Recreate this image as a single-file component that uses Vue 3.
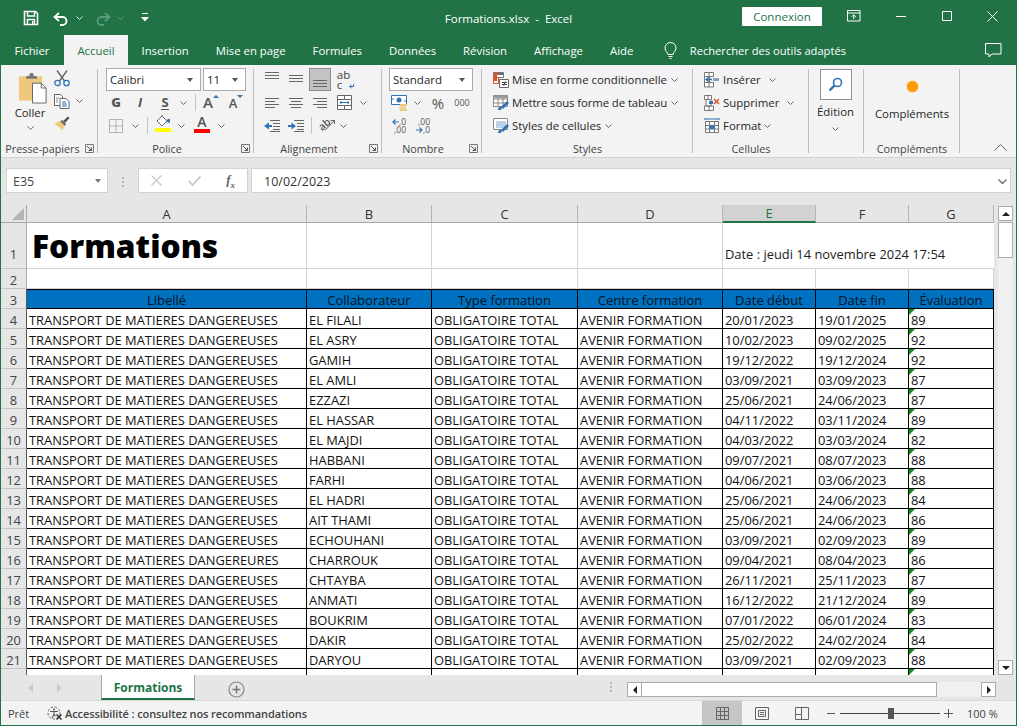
<script setup>
const tabs = ['Fichier','Accueil','Insertion','Mise en page','Formules','Données','Révision','Affichage','Aide']
const label = 'TRANSPORT DE MATIERES DANGEREUSES'
const data = [
  [4,label,'EL FILALI','20/01/2023','19/01/2025','89'],
  [5,label,'EL ASRY','10/02/2023','09/02/2025','92'],
  [6,label,'GAMIH','19/12/2022','19/12/2024','92'],
  [7,label,'EL AMLI','03/09/2021','03/09/2023','87'],
  [8,label,'EZZAZI','25/06/2021','24/06/2023','87'],
  [9,label,'EL HASSAR','04/11/2022','03/11/2024','89'],
  [10,label,'EL MAJDI','04/03/2022','03/03/2024','82'],
  [11,label,'HABBANI','09/07/2021','08/07/2023','88'],
  [12,label,'FARHI','04/06/2021','03/06/2023','88'],
  [13,label,'EL HADRI','25/06/2021','24/06/2023','84'],
  [14,label,'AIT THAMI','25/06/2021','24/06/2023','86'],
  [15,label,'ECHOUHANI','03/09/2021','02/09/2023','89'],
  [16,'TRANSPORT DE MATIERES DANGEREURES','CHARROUK','09/04/2021','08/04/2023','86'],
  [17,label,'CHTAYBA','26/11/2021','25/11/2023','87'],
  [18,label,'ANMATI','16/12/2022','21/12/2024','89'],
  [19,label,'BOUKRIM','07/01/2022','06/01/2024','83'],
  [20,label,'DAKIR','25/02/2022','24/02/2024','84'],
  [21,label,'DARYOU','03/09/2021','02/09/2023','88'],
].map(r => ({ n: r[0], a: r[1], b: r[2], c: 'OBLIGATOIRE TOTAL', d: 'AVENIR FORMATION', e: r[3], f: r[4], g: r[5] }))
const heads = ['Libellé','Collaborateur','Type formation','Centre formation','Date début','Date fin','Évaluation']
const cols = ['A','B','C','D','E','F','G']
</script>

<template>
  <div class="window">
    <svg class="defs" width="0" height="0">
      <symbol id="chev" viewBox="0 0 7 4"><path d="M.5.5 3.5 3.5 6.5.5" fill="none" stroke="#666" stroke-width="1"/></symbol>
      <symbol id="launch" viewBox="0 0 9 9"><path d="M.5.5h8v8h-8z" fill="none" stroke="#777"/><path d="M2 2 6.5 6.5M6.5 3.5v3h-3" fill="none" stroke="#555"/></symbol>
    </svg>

    <header class="titlebar">
      <div class="qat">
        <svg class="q-save" width="16" height="16" viewBox="0 0 16 16"><path d="M1.500 1.500h11l2 2v11h-13z" fill="none" stroke="#fff" stroke-width="1.600"/><path d="M4.500 2v4h7V2M4.500 14.500v-5h7v5" fill="none" stroke="#fff" stroke-width="1.400"/><path d="M9 11h1.500v3H9z" fill="#fff"/></svg>
        <svg class="q-undo" width="16" height="14" viewBox="0 0 16 14"><path d="M6 1 1.500 5 6 9" fill="none" stroke="#fff" stroke-width="1.800"/><path d="M2 5h7.500a4 4 0 0 1 0 8H7" fill="none" stroke="#fff" stroke-width="1.800"/></svg>
        <svg class="q-chev" width="7" height="4"><path d="M.5.5 3.500 3.500 6.500.5" fill="none" stroke="#dfe9e3"/></svg>
        <svg class="q-redo" width="16" height="14" viewBox="0 0 16 14"><path d="M10 1 14.500 5 10 9" fill="none" stroke="#5b9a78" stroke-width="1.800"/><path d="M14 5H6.500a4 4 0 0 0 0 8H9" fill="none" stroke="#5b9a78" stroke-width="1.800"/></svg>
        <svg class="q-chev2" width="7" height="4"><path d="M.5.5 3.500 3.500 6.500.5" fill="none" stroke="#5b9a78"/></svg>
        <svg class="q-cust" width="8" height="9" viewBox="0 0 8 9"><path d="M1 .5h6" stroke="#fff" fill="none"/><path d="M0 4h8L4 8.500z" fill="#fff"/></svg>
      </div>
      <div class="doc-title">Formations.xlsx&nbsp; -&nbsp; Excel</div>
      <div class="win-right">
        <button class="signin">Connexion</button>
        <svg class="w-opt" width="14" height="12" viewBox="0 0 14 12"><path d="M.5.500h12.500v10.500H.5zM.5 3h12.500" fill="none" stroke="#fff"/><path d="M6.800 9V5M4.800 6.800l2-2 2 2" fill="none" stroke="#fff"/></svg>
        <svg class="w-min" width="10" height="1"><path d="M0 .5h10" stroke="#fff"/></svg>
        <svg class="w-max" width="10" height="10"><path d="M.5.5h9v9h-9z" fill="none" stroke="#fff"/></svg>
        <svg class="w-close" width="11" height="11"><path d="M.5.5l10 10M10.500.5l-10 10" stroke="#fff" fill="none"/></svg>
      </div>
    </header>

    <nav class="tabbar">
      <span v-for="t in tabs" :key="t" class="tab" :class="{ active: t === 'Accueil' }">{{ t }}</span>
      <svg class="bulb" width="13" height="17" viewBox="0 0 13 17"><path d="M4 12.500C3.500 10 1 9 1 6a5.500 5.500 0 0 1 11 0c0 3-2.500 4-3 6.500z" fill="none" stroke="#fff"/><path d="M4.500 14.500h4M5.500 16.500h2" stroke="#fff" fill="none"/></svg>
      <span class="search">Rechercher des outils adaptés</span>
      <svg class="comment" width="17" height="15" viewBox="0 0 17 15"><path d="M.5.500h15.500v10.500H7l-3 3v-3H.5z" fill="none" stroke="#fff"/></svg>
    </nav>

    <section class="ribbon">
      <!-- Presse-papiers -->
      <div class="group g-clip">
        <div class="clip-body">
          <div class="paste">
            <svg class="paste-i" width="30" height="32" viewBox="0 0 30 33"><path d="M1 5h23v24H1z" fill="#edc87e" stroke="#edc87e"/><path d="M8 4h3l1-3h3l1 3h3v3H8z" fill="#7a7a7a"/><path d="M14.500 11.500h9l5 5v15.500h-14z" fill="#fff" stroke="#666"/><path d="M23.500 11.500v5h5" fill="none" stroke="#666"/></svg>
            <span class="paste-text">Coller</span>
            <svg class="chev" width="7" height="4"><use href="#chev"/></svg>
          </div>
          <div class="clip-tools">
            <svg width="16" height="17" viewBox="0 0 16 17"><path d="M3 .5 10.500 11M13 .5 5.500 11" fill="none" stroke="#666" stroke-width="1.400"/><circle cx="3.500" cy="13" r="2.700" fill="none" stroke="#2f75b5" stroke-width="1.300"/><circle cx="12.500" cy="13" r="2.700" fill="none" stroke="#2f75b5" stroke-width="1.300"/></svg>
            <div class="copy-row">
              <svg width="16" height="16" viewBox="0 0 16 16"><path d="M.5 1.500h6l2 2v9h-8z" fill="#fff" stroke="#666"/><path d="M6 5.500h6l3 3v7H6z" fill="#fff" stroke="#666"/><path d="M8 9h4M8 11h5M8 13h5" stroke="#2f75b5"/><path d="M2 5h3M2 7h2M2 9h2" stroke="#888"/></svg>
              <svg class="chev" width="7" height="4"><use href="#chev"/></svg>
            </div>
            <svg width="16" height="16" viewBox="0 0 16 16"><path d="M9 6 14 1.500l1.500 1.500L11 8z" fill="#555"/><path d="M8 5 12 9 8.500 15 .5 8.500z" fill="#edc87e"/><path d="M8 5 12 9 10.800 10.800 6.500 6.500z" fill="#666"/></svg>
          </div>
        </div>
        <div class="glabel launchable"><span>Presse-papiers</span><svg class="launch" width="9" height="9"><use href="#launch"/></svg></div>
      </div>

      <!-- Police -->
      <div class="group g-font">
        <div class="rows">
          <div class="row selects">
            <div class="select s-font"><span>Calibri</span><i class="caret"></i></div>
            <div class="select s-size"><span>11</span><i class="caret"></i></div>
          </div>
          <div class="row">
            <span class="sl w24"><b class="glyph bold">G</b></span>
            <span class="sl w24"><b class="glyph ital">I</b></span>
            <span class="sl w26"><b class="glyph under">S</b></span>
            <span class="sl w10"><svg class="chev" width="7" height="4"><use href="#chev"/></svg></span>
            <span class="sl w14"><i class="sep"></i></span>
            <span class="sl w18"><b class="glyph ga">A</b><svg class="tri-i" width="6" height="3"><path d="M0 3l3-3 3 3z" fill="#2f75b5"/></svg></span>
            <span class="sl w32"><b class="glyph gb">A</b><svg class="tri-i" width="6" height="3"><path d="M0 0h6L3 3z" fill="#2f75b5"/></svg></span>
          </div>
          <div class="row">
            <span class="sl w24"><svg width="14" height="14" viewBox="0 0 14 14"><path d="M.5.500h13v13H.5zM7 .5v13M.5 7h13" fill="none" stroke="#777" stroke-dasharray="1 1"/></svg></span>
            <span class="sl w14"><svg class="chev" width="7" height="4"><use href="#chev"/></svg></span>
            <span class="sl w10"><i class="sep"></i></span>
            <span class="sl w22 stack"><svg width="16" height="12" viewBox="0 0 16 12"><path d="M2 6l5-5 5 5-5 5z" fill="#fff" stroke="#666"/><path d="M7 1V0" stroke="#666"/><path d="M12 5c2-2 3-1 3 0s0 3-1 3-2-1-2-3z" fill="#2f75b5"/></svg><i class="bar yellow"></i></span>
            <span class="sl w14"><svg class="chev" width="7" height="4"><use href="#chev"/></svg></span>
            <span class="sl w28 stack"><b class="glyph fa">A</b><i class="bar red"></i></span>
            <span class="sl w10"><svg class="chev" width="7" height="4"><use href="#chev"/></svg></span>
          </div>
        </div>
        <div class="glabel launchable"><span>Police</span><svg class="launch" width="9" height="9"><use href="#launch"/></svg></div>
      </div>

      <!-- Alignement -->
      <div class="group g-align">
        <div class="rows">
          <div class="row">
            <span class="sl w24"><svg class="up" width="14" height="7"><path d="M0 .5h14M0 3.500h14M0 6.500h14" stroke="#666"/></svg></span>
            <span class="sl w24"><svg class="mid-i" width="14" height="7"><path d="M0 .5h14M0 3.500h14M0 6.500h14" stroke="#666"/></svg></span>
            <span class="sl w22 pressed"><svg class="down" width="14" height="7"><path d="M0 .5h14M0 3.500h14M0 6.500h14" stroke="#666"/></svg></span>
            <span class="sl w26"><span class="wrap-t"><span>ab</span><span>c</span></span><svg class="wrap-a" width="5" height="5"><path d="M4.500 0v2.500H1M2.500 1 .5 2.500l2 1.500" fill="none" stroke="#2f75b5"/></svg></span>
          </div>
          <div class="row">
            <span class="sl w24"><svg width="14" height="10"><path d="M0 .5h14M0 3.500h10M0 6.500h14M0 9.500h10" stroke="#666"/></svg></span>
            <span class="sl w24"><svg width="14" height="10"><path d="M0 .5h14M2 3.500h10M0 6.500h14M2 9.500h10" stroke="#666"/></svg></span>
            <span class="sl w24"><svg width="14" height="10"><path d="M0 .5h14M4 3.500h10M0 6.500h14M4 9.500h10" stroke="#666"/></svg></span>
            <span class="sl w24"><svg width="15" height="15" viewBox="0 0 15 15"><path d="M.5.500h14v14H.5zM.5 4.500h14M.5 10.500h14M7.500.5v4M7.500 10.500v4" fill="#fff" stroke="#666"/><path d="M3 7.500h9M4.500 6 3 7.500 4.500 9M10.500 6 12 7.500 10.500 9" fill="none" stroke="#2f75b5"/></svg></span>
            <span class="sl w14"><svg class="chev" width="7" height="4"><use href="#chev"/></svg></span>
          </div>
          <div class="row">
            <span class="sl w24"><svg width="16" height="12"><path d="M6 .5h10M9 3.500h7M9 6.500h7M9 9.500h7M6 11.500h10" stroke="#666"/><path d="M0 6 5 2.500v7z" fill="#2f75b5"/><path d="M3 6h5" stroke="#2f75b5" stroke-width="2"/></svg></span>
            <span class="sl w24"><svg width="16" height="12"><path d="M6 .5h10M9 3.500h7M9 6.500h7M9 9.500h7M6 11.500h10" stroke="#666"/><path d="M8 6 3.500 2.500v7z" fill="#2f75b5"/><path d="M0 6h5" stroke="#2f75b5" stroke-width="2"/></svg></span>
            <span class="sl w6"><i class="sep"></i></span>
            <span class="sl w26"><b class="ori">ab</b><svg class="ori-l" width="10" height="11" viewBox="0 0 10 11"><path d="M0 10.500 9 1M5.500.5H9.500V4" fill="none" stroke="#666"/></svg></span>
            <span class="sl w6"><svg class="chev" width="7" height="4"><use href="#chev"/></svg></span>
          </div>
        </div>
        <div class="glabel launchable"><span>Alignement</span><svg class="launch" width="9" height="9"><use href="#launch"/></svg></div>
      </div>

      <!-- Nombre -->
      <div class="group g-num">
        <div class="rows">
          <div class="row selects">
            <div class="select s-num"><span>Standard</span><i class="caret"></i></div>
          </div>
          <div class="row">
            <span class="sl w22"><svg width="17" height="16" viewBox="0 0 17 16"><path d="M.5.500h15v9H.5z" fill="#fff" stroke="#2f75b5" stroke-width="1"/><circle cx="8" cy="5" r="2.500" fill="#2f75b5"/><path d="M0 4h3M13 6h3" stroke="#2f75b5"/><path d="M9 9h7v2H9zM8 11.500h7v2H8zM9 14h7v2H9z" fill="#edc87e"/></svg></span>
            <span class="sl w14"><svg class="chev" width="7" height="4"><use href="#chev"/></svg></span>
            <span class="sl w28 pct">%</span>
            <span class="sl w20 th">000</span>
          </div>
          <div class="row">
            <span class="sl w22"><span class="dec"><span class="dl"><svg width="7" height="6"><path d="M7 3H1M3.500.5 1 3l2.500 2.500" fill="none" stroke="#2f75b5" stroke-width="1.200"/></svg>,0</span><span class="dl">,00</span></span></span>
            <span class="sl w26"><span class="dec"><span class="dl">,00</span><span class="dl"><svg width="7" height="6"><path d="M0 3h6M3.500.5 6 3 3.500 5.500" fill="none" stroke="#2f75b5" stroke-width="1.200"/></svg>,0</span></span></span>
          </div>
        </div>
        <div class="glabel launchable"><span>Nombre</span><svg class="launch" width="9" height="9"><use href="#launch"/></svg></div>
      </div>

      <!-- Styles -->
      <div class="group g-styles">
        <div class="rows list">
          <div class="row item">
            <svg width="16" height="16" viewBox="0 0 16 16"><path d="M.5.500h10v5H.5z" fill="#fff" stroke="#777"/><path d="M1 1h6v2H1z" fill="#d9542b"/><path d="M7 1h3v2H7z" fill="#2f75b5"/><path d="M1 3h3v6H1z" fill="#d9542b"/><path d="M.5 5.500h5v6h-5z" fill="none" stroke="#d9542b"/><path d="M6.500 7.500h9v8h-9z" fill="#fff" stroke="#666"/><path d="M9 10.500h5M9 12.500h5M12.500 9.500l-2 4" stroke="#444" fill="none"/></svg>
            <span>Mise en forme conditionnelle</span><svg class="chev" width="7" height="4"><use href="#chev"/></svg>
          </div>
          <div class="row item">
            <svg width="16" height="16" viewBox="0 0 16 16"><path d="M.5.500h14v11H.5zM5 .5v11M10 .5v11M.5 4h14M.5 8h14" fill="#fff" stroke="#888"/><path d="M.5.500h14V3H.5z" fill="#999"/><path d="M8 12 14 6l2 2-6 6z" fill="#2f75b5"/><path d="M5 15c0-3 2-4 4-3l-1 3z" fill="#2f75b5"/></svg>
            <span class="tight">Mettre sous forme de tableau</span><svg class="chev" width="7" height="4"><use href="#chev"/></svg>
          </div>
          <div class="row item">
            <svg width="16" height="16" viewBox="0 0 16 16"><path d="M.5.500h14v11H.5z" fill="#fff" stroke="#888"/><path d="M3 3h10v7H3z" fill="#bcd0e6"/><path d="M8 12 14 6l2 2-6 6z" fill="#2f75b5"/><path d="M5 15c0-3 2-4 4-3l-1 3z" fill="#2f75b5"/></svg>
            <span>Styles de cellules</span><svg class="chev" width="7" height="4"><use href="#chev"/></svg>
          </div>
        </div>
        <div class="glabel"><span>Styles</span></div>
      </div>

      <!-- Cellules -->
      <div class="group g-cells">
        <div class="rows list">
          <div class="row item">
            <svg width="16" height="16" viewBox="0 0 16 16"><path d="M.5.500h9v4h-9zM5 .5v4M.5 10.500h9v4.500h-9zM5 10.500v4.500M.5 4.500h5v6h-5z" fill="#fff" stroke="#777"/><path d="M9 7.500h6" stroke="#8a9fb5" stroke-width="3"/><path d="M2 7.500h6M5 5 2 7.500 5 10" fill="none" stroke="#2f75b5" stroke-width="1.300"/></svg>
            <span>Insérer</span><svg class="chev c-a" width="7" height="4"><use href="#chev"/></svg>
          </div>
          <div class="row item">
            <svg width="16" height="16" viewBox="0 0 16 16"><path d="M.5.500h7v4h-7zM4 .5v4M.5 11h9v4.500h-9zM5 11v4.500M2 4.500h5V11H2z" fill="#fff" stroke="#777"/><path d="M5 6h4v3H5z" fill="#2f75b5"/><path d="M10 4l5 5M15 4l-5 5" stroke="#d9542b" stroke-width="1.500"/></svg>
            <span>Supprimer</span><svg class="chev c-b" width="7" height="4"><use href="#chev"/></svg>
          </div>
          <div class="row item">
            <svg width="16" height="16" viewBox="0 0 16 16"><path d="M1.500 3.500h13v11h-13zM1.500 7.500h13M1.500 11h13M5.500 3.500v11M10.500 3.500v11" fill="#fff" stroke="#777"/><path d="M5.500 7.500h5V11h-5z" fill="#2f75b5"/><path d="M1 1h14M1 0v2M15 0v2" stroke="#2f75b5" fill="none"/></svg>
            <span>Format</span><svg class="chev c-c" width="7" height="4"><use href="#chev"/></svg>
          </div>
        </div>
        <div class="glabel"><span>Cellules</span></div>
      </div>

      <!-- Edition -->
      <div class="group g-edit">
        <div class="edit-btn">
          <svg width="15" height="15" viewBox="0 0 15 15"><circle cx="9.500" cy="5.500" r="4" fill="#fff" stroke="#2f75b5" stroke-width="1.600"/><path d="M6.500 8.500 1.500 13.500" stroke="#2f75b5" stroke-width="2.400"/></svg>
        </div>
        <span class="edit-text">Édition</span>
        <svg class="chev" width="7" height="4"><use href="#chev"/></svg>
      </div>

      <!-- Compléments -->
      <div class="group g-add">
        <i class="dot"></i>
        <span class="add-text">Compléments</span>
        <div class="glabel"><span>Compléments</span></div>
      </div>

      <div class="collapse">
        <svg width="13" height="7" viewBox="0 0 13 7"><path d="M.5 6.500l6-6 6 6" fill="none" stroke="#666"/></svg>
      </div>
    </section>

    <section class="formula">
      <div class="fbox name"><span>E35</span><i class="caret lt"></i></div>
      <div class="vdots"><i></i><i></i><i></i></div>
      <div class="fbox fx">
        <svg width="11" height="11" viewBox="0 0 11 11"><path d="M.5.500l10 10M10.500.5l-10 10" stroke="#c8c8c8" stroke-width="1.400" fill="none"/></svg>
        <svg width="13" height="10" viewBox="0 0 13 10"><path d="M.5 5 4.500 9 12.500.5" stroke="#c8c8c8" stroke-width="1.800" fill="none"/></svg>
        <span class="fx-t">f<sub>x</sub></span>
      </div>
      <div class="fbox input"><span>10/02/2023</span>
        <svg width="9" height="5" viewBox="0 0 9 5"><path d="M.5.500l4 4 4-4" fill="none" stroke="#666" stroke-width="1.200"/></svg>
      </div>
    </section>

    <section class="work">
      <div class="sheet">
        <div class="grid">
          <div class="corner"><i></i></div>
          <div v-for="c in cols" :key="c" class="col-h" :class="{ sel: c === 'E' }">{{ c }}</div>

          <div class="row-h rh1">1</div>
          <div class="cell title">Formations</div>
          <div class="cell plain"></div>
          <div class="cell plain"></div>
          <div class="cell plain"></div>
          <div class="cell datecell">Date : jeudi 14 novembre 2024 17:54</div>

          <div class="row-h">2</div>
          <div v-for="c in cols" :key="'r2' + c" class="cell plain"></div>

          <div class="row-h dark">3</div>
          <div v-for="h in heads" :key="h" class="cell head">{{ h }}</div>

          <template v-for="r in data" :key="r.n">
            <div class="row-h dark">{{ r.n }}</div>
            <div class="cell tb">{{ r.a }}</div>
            <div class="cell tb">{{ r.b }}</div>
            <div class="cell tb">{{ r.c }}</div>
            <div class="cell tb">{{ r.d }}</div>
            <div class="cell tb">{{ r.e }}</div>
            <div class="cell tb">{{ r.f }}</div>
            <div class="cell tb flag">{{ r.g }}</div>
          </template>

          <div class="row-h dark"></div>
          <div class="cell tb"></div>
          <div class="cell tb"></div>
          <div class="cell tb"></div>
          <div class="cell tb"></div>
          <div class="cell tb">03/09/2021</div>
          <div class="cell tb">02/09/2023</div>
          <div class="cell tb flag"></div>
        </div>
      </div>
      <div class="vscroll">
        <div class="sbtn"><i class="tri-up"></i></div>
        <div class="vthumb"></div>
        <div class="vtrack"></div>
        <div class="sbtn"><i class="tri-down"></i></div>
      </div>
    </section>

    <section class="sheetbar">
      <div class="nav">
        <svg width="5" height="8"><path d="M5 0v8L0 4z" fill="#c8c8c8"/></svg>
        <svg width="5" height="8"><path d="M0 0v8l5-4z" fill="#c8c8c8"/></svg>
      </div>
      <div class="sheet-tab">Formations</div>
      <svg class="add" width="17" height="17" viewBox="0 0 17 17"><circle cx="8.500" cy="8.500" r="7.500" fill="none" stroke="#888" stroke-width="1.200"/><path d="M8.500 4.500v8M4.500 8.500h8" stroke="#777" stroke-width="1.500"/></svg>
      <div class="vdots mid"><i></i><i></i><i></i></div>
      <div class="hscroll">
        <div class="hbtn"><i class="tri-left"></i></div>
        <div class="hthumb"></div>
        <div class="htrack"></div>
        <div class="hbtn"><i class="tri-right"></i></div>
      </div>
    </section>

    <footer class="status">
      <span class="ready">Prêt</span>
      <svg class="acc" width="18" height="15" viewBox="0 0 18 15"><circle cx="8" cy="7" r="6" fill="none" stroke="#666" stroke-dasharray="2.500 1.500"/><circle cx="8" cy="3.500" r="1" fill="#555"/><path d="M4 5.500h8M8 5.500v3l-2 3.500M8 8.500l1.500 1.500" fill="none" stroke="#555" stroke-width="1.100"/><path d="M10.500 8.500l5 5M15.500 8.500l-5 5" stroke="#333" stroke-width="1.500"/></svg>
      <span class="acc-t">Accessibilité : consultez nos recommandations</span>
      <div class="views">
        <span class="view on"><svg width="13" height="13" viewBox="0 0 13 13"><path d="M.5.500h12v12H.5zM4.500.5v12M8.500.5v12M.5 4.500h12M.5 8.500h12" fill="none" stroke="#666"/></svg></span>
        <span class="view"><svg width="14" height="13" viewBox="0 0 14 13"><path d="M.5.500h13v12H.5z" fill="none" stroke="#666"/><path d="M3.500 3.500h7v6h-7zM5 5.500h4M5 7.500h4" fill="none" stroke="#666"/></svg></span>
        <span class="view"><svg width="14" height="13" viewBox="0 0 14 13"><path d="M.5.500h13v12H.5zM.5 7.500h6v-7M6.500 7.500v5" fill="none" stroke="#666"/></svg></span>
      </div>
      <div class="zoom">
        <svg width="8" height="1"><path d="M0 .5h8" stroke="#555"/></svg>
        <div class="slider"><i></i></div>
        <svg width="9" height="9"><path d="M0 4.500h9M4.500 0v9" stroke="#555"/></svg>
        <span class="pc">100 %</span>
      </div>
    </footer>
  </div>
</template>

<style>
html, body { margin: 0; overflow: hidden; background: #fff; }
</style>

<style scoped>
* { box-sizing: border-box; }
.window {
  width: 1017px; height: 726px; display: flex; flex-direction: column;
  border: solid #217346; border-width: 0 1px 1px; background: #e6e6e6; overflow: hidden;
  font-family: "Open Sans", "Noto Sans", sans-serif; font-size: 12px; color: #262626;
}
.defs { position: absolute; }
i { display: block; }

/* title */
.titlebar {
  height: 35px; background: #217346; display: grid; grid-template-columns: 1fr auto 1fr;
  align-items: center; color: #fff; flex: none; margin: 0 -1px; padding: 0 1px;
}
.qat { display: flex; align-items: center; padding-left: 22px; }
.q-undo { margin-left: 14px; margin-top: 2px; }
.q-chev { margin-left: 7px; }
.q-redo { margin-left: 12px; margin-top: 2px; }
.q-chev2 { margin-left: 6px; }
.q-cust { margin-left: 17px; }
.doc-title { font-size: 11.500px; padding-top: 2px; }
.win-right { display: flex; align-items: center; justify-content: flex-end; padding-right: 18px; padding-bottom: 3px; }
.signin {
  width: 80px; height: 19px; background: #fff; border: 0; color: #217346; padding: 0;
  font: 11.500px "Open Sans", sans-serif; border-radius: 1px;
}
.w-opt { margin-left: 25px; }
.w-min { margin-left: 35px; }
.w-max { margin-left: 36px; }
.w-close { margin-left: 35px; }

/* tabs */
.tabbar { height: 30px; background: #217346; display: flex; align-items: stretch; color: #fff; flex: none; margin: 0 -1px; padding-left: 1px; }
.tab { display: flex; align-items: center; padding: 0 13.500px; font-size: 11.350px; white-space: nowrap; }
.tab.active { background: #f3f3f3; color: #217346; padding: 0; width: 64px; justify-content: center; margin-left: 1px; }
.bulb { align-self: center; margin-left: 17px; }
.search { align-self: center; margin-left: 13px; font-size: 11.150px; white-space: nowrap; }
.comment { align-self: center; margin-left: auto; margin-right: 15px; }

/* ribbon */
.ribbon { height: 93px; background: #f3f3f3; display: flex; flex: none; border-bottom: 1px solid #d2d2d2; font-size: 11.400px; }
.group { position: relative; height: 92px; display: flex; flex-direction: column; flex: none; }
.group::after { content: ""; position: absolute; right: 0; top: 4px; bottom: 4px; width: 1px; background: #bdbdbd; }
.g-clip { width: 97px; }
.g-font { width: 156px; }
.g-align { width: 128px; }
.g-num { width: 100px; }
.g-styles { width: 211px; }
.g-cells { width: 116px; }
.g-edit { width: 55px; align-items: center; padding-top: 4px; }
.g-add { width: 96px; align-items: center; }
.glabel { height: 18px; margin-top: auto; display: flex; align-items: center; font-size: 10.800px; color: #444; padding-top: 1px; flex: none; align-self: stretch; }
.glabel span { flex: 1; text-align: center; white-space: nowrap; }
.launchable { padding-right: 4px; }
.launchable span { padding-right: 5px; }
.g-clip .launchable span { padding: 0 3px 0 2px; }
.launch { flex: none; }
.chev { flex: none; display: block; }

.clip-body { display: flex; padding: 7px 0 0 17px; }
.paste { width: 24px; display: flex; flex-direction: column; align-items: center; }
.paste-i { align-self: flex-start; flex: none; }
.paste-text { font-size: 11.300px; line-height: 18px; margin: 0 -10px; }
.paste .chev { margin-top: 4px; }
.clip-tools { margin-left: 12px; margin-top: -2px; display: flex; flex-direction: column; gap: 6px; }
.copy-row { display: flex; align-items: center; gap: 6px; width: 32px; }

.rows { display: flex; flex-direction: column; padding: 3px 0 0 6px; }
.row { height: 23px; display: flex; align-items: center; flex: none; }
.selects { gap: 2px; }
.g-font .selects { padding-left: 2px; }
.select {
  height: 23px; border: 1px solid #ababab; background: #fff; display: flex; align-items: center;
  justify-content: space-between; padding: 0 7px 0 3px; font-size: 11.500px;
}
.s-font { width: 95px; }
.s-size { width: 43px; }
.s-num { width: 84px; margin-left: 1px; }
.caret { width: 0; height: 0; border: 3.500px solid transparent; border-top: 4px solid #555; border-bottom: 0; }
.sl { display: flex; align-items: center; justify-content: center; flex: none; height: 23px; position: relative; }
.w6 { width: 6px; } .w10 { width: 10px; } .w14 { width: 14px; } .w18 { width: 18px; } .w20 { width: 20px; }
.w22 { width: 22px; } .w24 { width: 24px; } .w26 { width: 26px; } .w28 { width: 28px; } .w32 { width: 32px; }
.sep { width: 1px; height: 17px; background: #c4c4c4; }
.glyph { font-style: normal; font-family: "Open Sans", sans-serif; color: #555; font-size: 13px; line-height: 1; }
.glyph.bold { font-weight: 800; }
.glyph.ital { font-style: italic; font-weight: 700; }
.glyph.under { font-weight: 700; border-bottom: 1.500px solid #555; }
.glyph.ga { font-size: 15px; font-weight: 600; }
.glyph.gb { font-size: 13px; font-weight: 600; margin-top: 2px; }
.tri-i { align-self: flex-start; margin-top: 4px; flex: none; }
.stack { flex-direction: column; justify-content: flex-start; padding-top: 1px; }
.bar { width: 16px; height: 4px; margin-top: 1px; flex: none; }
.yellow { background: #ffff00; }
.red { background: #ff0000; }
.glyph.fa { font-weight: 600; font-size: 14px; height: 13px; }
.up { margin-top: -9px; }
.mid-i { margin-top: -2px; }
.down { margin-top: 7px; }
.pressed { background: #c3c3c3; border: 1px solid #8f8f8f; margin: 0 1px; }
.wrap-t { font-size: 11.500px; line-height: 10px; color: #444; font-weight: 500; margin-left: -3px; display: flex; flex-direction: column; }
.wrap-a { position: absolute; left: 17px; bottom: 2px; }
.ori { font: 600 10.500px/1 "Open Sans", sans-serif; color: #555; transform: rotate(-40deg); margin: -2px 6px 0 0; }
.ori-l { position: absolute; left: 11px; top: 6px; }
.pct { font-size: 15px; color: #555; }
.th { font-size: 9px; color: #555; }
.dec { display: flex; flex-direction: column; align-items: flex-end; font-size: 8.500px; line-height: 8px; color: #555; }
.dl { display: flex; align-items: center; height: 8px; white-space: nowrap; }

.list { padding: 0 0 0 11px; margin-top: 3px; padding-top: 0; }
.item { gap: 3px; font-size: 11.400px; white-space: nowrap; }
.tight { letter-spacing: -.1px; }
.item .chev { margin-left: 1px; }
.g-cells .list { padding-left: 11px; }
.item .c-a { margin-left: 5px; }
.item .c-b { margin-left: 5px; }
.item .c-c { margin-left: 0; }

.edit-btn { width: 32px; height: 31px; border: 1px solid #8f8f8f; background: #fff; display: flex; align-items: center; justify-content: center; margin-right: 2px; }
.edit-text { margin-top: 3px; line-height: 18px; margin-right: 2px; }
.g-edit .chev { margin-top: 6px; margin-right: 2px; }
.dot { width: 11px; height: 11px; border-radius: 50%; background: #ff9a00; margin-top: 16px; box-shadow: 0 0 2px #ffc46a; }
.add-text { margin-top: 13px; line-height: 18px; white-space: nowrap; }
.collapse { flex: 1; display: flex; align-items: flex-end; justify-content: flex-end; padding: 0 9px 6px 0; }

/* formula */
.formula { height: 47px; display: flex; align-items: flex-start; padding: 10px 5px 0; flex: none; font-size: 12.500px; }
.fbox { height: 25px; background: #fff; border: 1px solid #d2d2d2; display: flex; align-items: center; flex: none; }
.name { width: 102px; padding: 1px 6px 0; justify-content: space-between; color: #444; }
.caret.lt { border-top-color: #777; }
.vdots { width: 30px; display: flex; flex-direction: column; align-items: center; gap: 2px; align-self: center; margin-top: -10px; }
.vdots i { width: 2px; height: 2px; background: #b4b4b4; }
.fx { width: 110px; padding: 0 10px 0 12px; justify-content: space-between; }
.fx-t { font: italic 700 13px "Liberation Serif", serif; color: #666; padding-right: 2px; }
.fx-t sub { font-size: 9px; }
.input { width: 760px; margin-left: 3px; padding: 1px 3px 0 12px; justify-content: space-between; color: #333; }

/* sheet */
.work { flex: 1; display: flex; min-height: 0; }
.sheet { width: 993px; overflow: hidden; flex: none; background: #fff; }
.grid {
  display: grid; grid-template-columns: 26px 280px 125px 146px 145px 93px 93px 85px;
  grid-template-rows: 18px 46px 20px repeat(20, 20px);
  font-size: 12.900px;
}
.corner { background: #e6e6e6; border-right: 1px solid #a8a8a8; border-bottom: 1px solid #a8a8a8; padding: 3px 0 0 11px; }
.corner i { width: 12px; height: 12px; background: #b4b4b4; clip-path: polygon(100% 0, 100% 100%, 0 100%); }
.col-h { background: #e6e6e6; display: flex; align-items: center; justify-content: center; color: #333; border-right: 1px solid #b4b4b4; border-bottom: 1px solid #a8a8a8; }
.col-h.sel { background: #d2d2d2; color: #217346; border-bottom: 2px solid #217346; }
.row-h { background: #e6e6e6; display: flex; align-items: center; justify-content: center; color: #444; border-right: 1px solid #a8a8a8; border-bottom: 1px solid #c4c4c4; padding-top: 2px; }
.row-h.dark { border-right-color: #555; }
.rh1 { align-items: flex-end; padding-bottom: 5px; }
.cell { background: #fff; display: flex; align-items: center; padding: 3px 0 0 2px; white-space: nowrap; overflow: hidden; color: #111; }
.plain { border-right: 1px solid #d4d4d4; border-bottom: 1px solid #d4d4d4; }
.title { font-size: 31.700px; font-weight: 800; color: #000; padding: 0 0 0 5px; border-right: 1px solid #d4d4d4; border-bottom: 1px solid #d4d4d4; }
.datecell { grid-column: span 3; border-bottom: 1px solid #d4d4d4; align-items: flex-end; padding: 0 0 5px 2px; color: #222; }
.head { background: #0070c0; justify-content: center; border: solid #000; border-width: 1px 1px 1px 0; color: #0a1420; padding: 1px 0 0; font-size: 13px; }
.tb { border-right: 1px solid #000; border-bottom: 1px solid #000; }
.flag { position: relative; }
.flag::before { content: ""; position: absolute; left: 0; top: 0; border-style: solid; border-width: 6px 6px 0 0; border-color: #128a1e transparent transparent transparent; }

.vscroll { flex: 1; display: flex; flex-direction: column; padding: 1px 2px 0 3px; background: #e6e6e6; }
.sbtn { height: 15px; flex: none; border: 1px solid #ababab; background: #fff; display: flex; align-items: center; justify-content: center; margin: 0 1px; }
.vthumb { height: 36px; flex: none; background: #fff; border: 1px solid #ababab; margin: 1px 1px 0; }
.vtrack { flex: 1; background: #f0f0f0; margin: 0 1px; }
.tri-up { width: 0; height: 0; border: 4px solid transparent; border-bottom: 4px solid #222; border-top: 0; }
.tri-down { width: 0; height: 0; border: 4px solid transparent; border-top: 4px solid #222; border-bottom: 0; }
.tri-left { width: 0; height: 0; border: 4px solid transparent; border-right: 4px solid #222; border-left: 0; }
.tri-right { width: 0; height: 0; border: 4px solid transparent; border-left: 4px solid #222; border-right: 0; }

.sheetbar { height: 25px; background: #e6e6e6; display: flex; align-items: flex-start; flex: none; }
.nav { width: 100px; display: flex; gap: 24px; padding: 9px 0 0 27px; }
.sheet-tab {
  width: 94px; height: 25px; background: #fff; color: #217346; font-weight: 700; font-size: 12px;
  display: flex; align-items: center; justify-content: center; padding-top: 1px;
  border: solid #a8a8a8; border-width: 0 1px; border-bottom: 2px solid #217346;
}
.add { margin: 6px 0 0 33px; }
.vdots.mid { width: 20px; margin: 7px 0 0 356px; align-self: flex-start; }
.hscroll { margin: 7px 0 0 6px; display: flex; height: 15px; width: 369px; }
.hbtn { width: 15px; flex: none; border: 1px solid #ababab; background: #fff; display: flex; align-items: center; justify-content: center; }
.hthumb { width: 295px; background: #fff; border: 1px solid #ababab; border-left: 0; flex: none; }
.htrack { flex: 1; background: #f0f0f0; }

.status { height: 25px; background: #f3f3f3; border-top: 1px solid #d8d8d8; display: flex; align-items: center; flex: none; font-size: 11px; color: #444; }
.ready { margin-left: 7px; width: 38px; }
.acc { flex: none; }
.acc-t { margin-left: 1px; font-weight: 600; white-space: nowrap; letter-spacing: -.1px; }
.views { margin-left: auto; display: flex; height: 24px; }
.view { width: 40px; display: flex; align-items: center; justify-content: center; }
.view.on { background: #c6c6c6; }
.zoom { display: flex; align-items: center; width: 194px; padding-left: 5px; }
.slider { width: 100px; height: 1px; background: #444; margin: 0 4px 0 5px; position: relative; }
.slider i { position: absolute; left: 48px; top: -5px; width: 6px; height: 11px; background: #555; }
.pc { margin-left: 14px; white-space: nowrap; }
</style>
